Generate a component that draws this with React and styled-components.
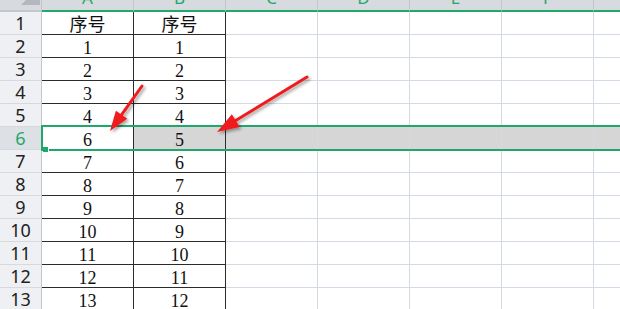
import React from "react";
import styled, { createGlobalStyle, css } from "styled-components";

const Global = createGlobalStyle`
  html, body { margin: 0; padding: 0; background: #fff; overflow: hidden; }
  #root { width: 620px; height: 309px; overflow: hidden; }
`;

const GREEN = "#1fa86b";
const GRID = "#d3d9e5";
const DARK = "#2b2b2b";

const Sheet = styled.div`
  position: relative;
  display: grid;
  grid-template-columns: 42px repeat(7, 92px);
  grid-template-rows: 12px repeat(13, 23px);
  width: 620px;
  height: 309px;
  overflow: hidden;
  font-family: "Liberation Serif", "Noto Sans CJK SC", serif;
`;

const Corner = styled.div`
  grid-row: 1;
  grid-column: 1;
  background: #d7dade;
  border-right: 1px solid #c3c7cd;
  border-bottom: 2px solid #c3c7cd;
  box-sizing: border-box;
  overflow: hidden;
  svg { display: block; }
`;

const ColHead = styled.div`
  grid-row: 1;
  grid-column: ${(p) => p.$c};
  background: #d7dade;
  border-right: 1px solid #c3c7cd;
  border-bottom: 2px solid ${GREEN};
  box-sizing: border-box;
  overflow: hidden;
  display: flex;
  justify-content: center;
  align-items: flex-end;
  padding-bottom: 4px;
  color: ${GREEN};
  font-family: "Noto Sans", "Liberation Sans", sans-serif;
  font-size: 17px;
  line-height: 1;
`;

const RowHead = styled.div`
  grid-row: ${(p) => p.$r};
  grid-column: 1;
  background: ${(p) => (p.$active ? "#dde0e5" : "#eef0f3")};
  border-right: 1px solid #c3c7cd;
  border-bottom: 1px solid #d6d9de;
  box-sizing: border-box;
  display: flex;
  justify-content: center;
  align-items: flex-end;
  padding-bottom: 1px;
  color: ${(p) => (p.$active ? GREEN : "#222")};
  font-family: "Noto Sans", "Liberation Sans", sans-serif;
  font-size: 18px;
  line-height: 20px;
`;

const Cell = styled.div`
  grid-row: ${(p) => p.$r};
  grid-column: ${(p) => p.$c};
  box-sizing: border-box;
  border-right: 1px solid ${GRID};
  border-bottom: 1px solid ${GRID};
  background: ${(p) => (p.$shade ? "#d6d6d6" : "#fff")};
  display: flex;
  justify-content: center;
  align-items: flex-end;
  color: #111;
  font-size: 18px;
  line-height: 18px;
  ${(p) =>
    p.$boxed &&
    css`
      border-right-color: ${DARK};
      border-bottom-color: ${DARK};
    `}
`;

const Selection = styled.div`
  grid-row: ${(p) => p.$r};
  grid-column: 2 / -1;
  margin: -2px 0 -1px -1px;
  border: 2px solid ${GREEN};
  border-right: none;
  position: relative;
  pointer-events: none;
  z-index: 2;
`;

const Handle = styled.span`
  position: absolute;
  left: 0px;
  bottom: -3px;
  width: 5px;
  height: 5px;
  background: ${GREEN};
  border: 1px solid #fff;
  border-left: none;
  border-bottom: none;
`;

const Overlay = styled.svg`
  position: absolute;
  left: 0;
  top: 0;
  width: 620px;
  height: 309px;
  pointer-events: none;
  z-index: 3;
`;

const colA = ["序号", "1", "2", "3", "4", "6", "7", "8", "9", "10", "11", "12", "13"];
const colB = ["序号", "1", "2", "3", "4", "5", "6", "7", "8", "9", "10", "11", "12"];
const letters = ["A", "B", "C", "D", "E", "F", "G"];
const SEL = 6;

function arrowPath(x1, y1, x2, y2, head, half) {
  const dx = x2 - x1;
  const dy = y2 - y1;
  const len = Math.hypot(dx, dy);
  const ux = dx / len;
  const uy = dy / len;
  const bx = x2 - ux * head;
  const by = y2 - uy * head;
  const px = -uy;
  const py = ux;
  return {
    line: { x1, y1, x2: bx + ux * 2, y2: by + uy * 2 },
    head: `${x2},${y2} ${bx + px * half},${by + py * half} ${bx - px * half},${by - py * half}`,
  };
}

const arrows = [arrowPath(142, 86, 110, 131, 20, 7), arrowPath(307, 77, 217, 132, 22, 7.5)];

export default function App() {
  const rows = [];
  for (let r = 1; r <= 13; r++) {
    const active = r === SEL;
    rows.push(
      <RowHead key={`h${r}`} $r={r + 1} $active={active}>
        {r}
      </RowHead>
    );
    for (let c = 0; c < 7; c++) {
      const text = c === 0 ? colA[r - 1] : c === 1 ? colB[r - 1] : "";
      rows.push(
        <Cell key={`c${r}-${c}`} $r={r + 1} $c={c + 2} $boxed={c < 2} $shade={active && c > 0}>
          {text}
        </Cell>
      );
    }
  }

  return (
    <>
      <Global />
      <Sheet>
        <Corner>
          <svg width="41" height="10" viewBox="0 0 41 10">
            <polygon points="40,-14 40,5 21,5" fill="#b4b8be" />
          </svg>
        </Corner>
        {letters.map((l, i) => (
          <ColHead key={l} $c={i + 2}>
            {l}
          </ColHead>
        ))}
        {rows}
        <Selection $r={SEL + 1}>
          <Handle />
        </Selection>
        <Overlay viewBox="0 0 620 309">
          <defs>
            <filter id="sh" x="-20%" y="-20%" width="140%" height="140%">
              <feDropShadow dx="2" dy="2" stdDeviation="1.5" floodColor="#000" floodOpacity="0.35" />
            </filter>
          </defs>
          {arrows.map((a, i) => (
            <g key={i} filter="url(#sh)">
              <line {...a.line} stroke="#ee1c1c" strokeWidth="3" strokeLinecap="round" />
              <polygon points={a.head} fill="#ee1c1c" />
            </g>
          ))}
        </Overlay>
      </Sheet>
    </>
  );
}
